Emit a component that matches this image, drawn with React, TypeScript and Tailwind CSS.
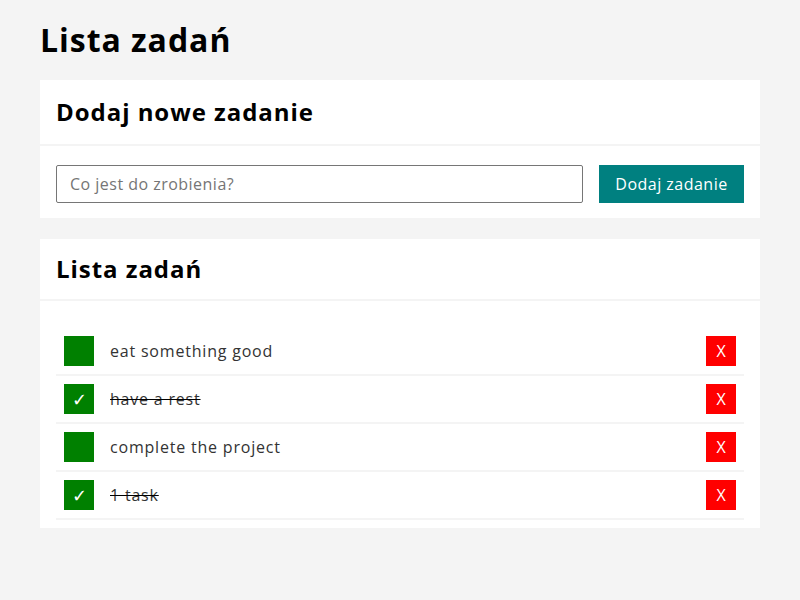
import { useState } from 'react';

type Task = { id: number; text: string; done: boolean };

const initialTasks: Task[] = [
  { id: 1, text: 'eat something good', done: false },
  { id: 2, text: 'have a rest', done: true },
  { id: 3, text: 'complete the project', done: false },
  { id: 4, text: '1 task', done: true },
];

export default function App() {
  const [tasks, setTasks] = useState<Task[]>(initialTasks);
  const [draft, setDraft] = useState('');

  const addTask = (e: React.FormEvent) => {
    e.preventDefault();
    if (!draft.trim()) return;
    setTasks([...tasks, { id: Date.now(), text: draft.trim(), done: false }]);
    setDraft('');
  };

  const toggle = (id: number) =>
    setTasks(tasks.map((t) => (t.id === id ? { ...t, done: !t.done } : t)));

  const remove = (id: number) => setTasks(tasks.filter((t) => t.id !== id));

  return (
    <div className="min-h-screen bg-[#f4f4f4] px-10 pt-[18px] font-['Open_Sans',sans-serif] text-black">
      <h1 className="text-[32px] font-bold leading-[44px] tracking-[0.03em]">Lista zadań</h1>

      {/* Add task */}
      <section className="mt-[18px] bg-white">
        <header className="flex h-[66px] items-center border-b-2 border-[#f4f4f4] px-4">
          <h2 className="text-2xl font-bold tracking-[0.04em]">Dodaj nowe zadanie</h2>
        </header>
        <form onSubmit={addTask} className="flex gap-4 px-4 pb-[15px] pt-[19px]">
          <input
            value={draft}
            onChange={(e) => setDraft(e.target.value)}
            placeholder="Co jest do zrobienia?"
            className="h-[38px] flex-1 rounded-[2px] border border-[#767676] px-[13px] text-base tracking-[0.03em] text-[#333] outline-none placeholder:text-[#757575]"
          />
          <button
            type="submit"
            className="h-[38px] w-[145px] bg-[#008080] text-base tracking-[0.03em] text-white"
          >
            Dodaj zadanie
          </button>
        </form>
      </section>

      {/* Task list */}
      <section className="mt-[21px] bg-white">
        <header className="flex h-[62px] items-center border-b-2 border-[#f4f4f4] px-4">
          <h2 className="text-2xl font-bold tracking-[0.04em]">Lista zadań</h2>
        </header>
        <ul className="px-4 pb-2 pt-[27px]">
          {tasks.map((t) => (
            <li
              key={t.id}
              className="flex h-12 items-center border-b-2 border-[#f4f4f4] px-2"
            >
              <button
                onClick={() => toggle(t.id)}
                className="flex h-[30px] w-[30px] items-center justify-center bg-[#008000] text-lg text-white"
              >
                {t.done ? '✓' : ''}
              </button>
              <span
                className={`ml-4 flex-1 text-base tracking-[0.05em] text-[#333] ${t.done ? 'line-through decoration-black' : ''}`}
              >
                {t.text}
              </span>
              <button
                onClick={() => remove(t.id)}
                className="flex h-[30px] w-[30px] items-center justify-center bg-[#ff0000] text-base text-white"
              >
                X
              </button>
            </li>
          ))}
        </ul>
      </section>
    </div>
  );
}
